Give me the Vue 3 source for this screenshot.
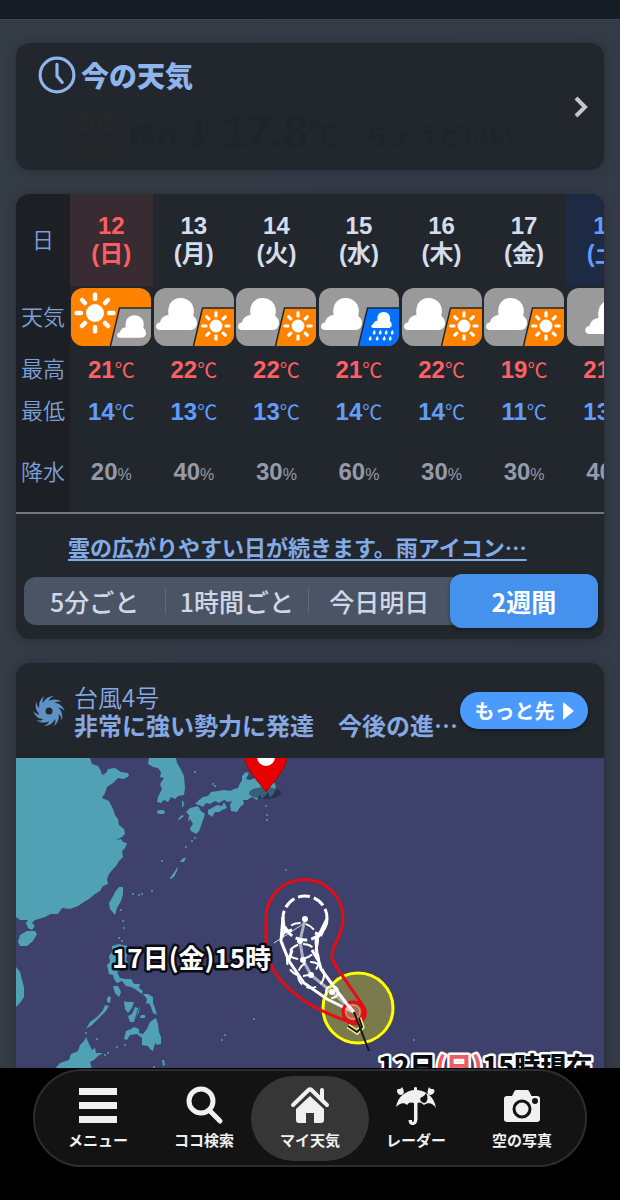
<script setup>
import { ref } from "vue";

const days = [
  { date: "12", week: "日", main: "sun", sub: "cloud", max: 21, min: 14, rain: 20 },
  { date: "13", week: "月", main: "cloud", sub: "sun", max: 22, min: 13, rain: 40 },
  { date: "14", week: "火", main: "cloud", sub: "sun", max: 22, min: 13, rain: 30 },
  { date: "15", week: "水", main: "cloud", sub: "rain", max: 21, min: 14, rain: 60 },
  { date: "16", week: "木", main: "cloud", sub: "sun", max: 22, min: 14, rain: 30 },
  { date: "17", week: "金", main: "cloud", sub: "sun", max: 19, min: 11, rain: 30 },
  { date: "18", week: "土", main: "cloud", sub: "", max: 21, min: 13, rain: 40 },
];

const fills = { sun: "#ff8200", cloud: "#9a9a9a", rain: "#0572ff" };

const rows = [
  { key: "max", label: "最高", unit: "℃" },
  { key: "min", label: "最低", unit: "℃" },
  { key: "rain", label: "降水", unit: "%" },
];

const tabs = ["5分ごと", "1時間ごと", "今日明日", "2週間"];
const activeTab = ref("2週間");

const menu = [
  { id: "menu", label: "メニュー" },
  { id: "search", label: "ココ検索" },
  { id: "home", label: "マイ天気" },
  { id: "radar", label: "レーダー" },
  { id: "photo", label: "空の写真" },
];
const activeMenu = ref("home");

const angles = [0, 45, 90, 135, 180, 225, 270, 315];
const blades = [0, 36, 72, 108, 144, 180, 216, 252, 288, 324];

const drops = [
  [55, 42], [61, 42], [67, 42], [73, 42],
  [51, 48], [58, 48], [65, 48], [71, 48],
];

// forecast positions on the map
const track = [
  { x: 300, y: 941, r: 18 },
  { x: 303, y: 960, r: 16 },
  { x: 311, y: 975, r: 13 },
  { x: 332, y: 992, r: 6 },
];

const islets = [
  [133, 894], [139, 895], [142, 894], [152, 891], [121, 910], [123, 921], [124, 928],
  [119, 938], [122, 941], [162, 861], [171, 878], [186, 847], [192, 841], [195, 838],
  [195, 772], [213, 784], [215, 786], [266, 806], [267, 815], [267, 820], [286, 870],
  [254, 1019], [222, 1040], [225, 1035], [105, 1055], [108, 1053], [117, 1047],
  [125, 1045], [154, 1067], [97, 1039], [414, 1040], [86, 1033], [109, 997],
];
</script>

<template>
  <div class="page">
    <svg class="defs" aria-hidden="true">
      <symbol id="cloud" viewBox="0 0 41 32">
        <path
          d="M4 32C1.500 32 0 30.500 0 28.500C0 26 2 24.500 4 24.500C5 20 8 17.500 12.500 17C11 7 16 0 24.500 0C33 0 38.500 6.500 37.800 14C37.600 16 37 17.500 37.500 18.300C40 20 41 22.500 41 25C41 29 38.500 32 34.500 32Z"
        />
      </symbol>
      <symbol id="sun" viewBox="0 0 42 42">
        <circle cx="21" cy="21" r="9" />
        <rect
          v-for="a in angles"
          :key="a"
          x="18.800"
          y="0.500"
          width="4.400"
          height="8.500"
          rx="1.800"
          :transform="`rotate(${a} 21 21)`"
        />
      </symbol>
    </svg>

    <header class="topbar"></header>

    <main class="main">
      <section class="card now">
        <h2 class="now__title">
          <svg class="now__clock" viewBox="0 0 36 36" aria-hidden="true">
            <circle cx="18" cy="18" r="16" />
            <path d="M18 8v11l5 6" />
          </svg>
          今の天気
        </h2>
        <div class="now__body">
          <svg class="now__icon" viewBox="0 0 40 40" aria-hidden="true">
            <rect width="40" height="40" rx="5" fill="#25272a" />
            <use href="#sun" x="5" y="5" width="30" height="30" fill="#222529" />
          </svg>
          <span>晴れ</span>
          <svg class="now__thermo" viewBox="0 0 18 30" aria-hidden="true">
            <path d="M4 4Q4 1 7 1Q10 1 10 4V18A6 6 0 1 1 4 18ZM12 4H17V6H12ZM12 10H16V12H12Z" />
          </svg>
          <b class="now__temp">17.8<small>℃</small></b>
          <span>ちょうどいい</span>
        </div>
        <a class="now__more" href="#now" aria-label="今の天気">
          <svg viewBox="0 0 14 24" aria-hidden="true"><path d="M2 3l9 9l-9 9" /></svg>
        </a>
      </section>

      <section class="card">
        <div class="scroll">
          <table class="forecast">
            <thead>
              <tr>
                <th class="forecast__label" scope="col">日</th>
                <th
                  v-for="day in days"
                  :key="day.date"
                  scope="col"
                  class="forecast__day"
                  :class="{ sunday: day.week === '日', saturday: day.week === '土' }"
                >
                  {{ day.date }}<br />({{ day.week }})
                </th>
              </tr>
            </thead>
            <tbody>
              <tr class="forecast__icons">
                <th class="forecast__label" scope="row">天気</th>
                <td v-for="day in days" :key="day.date">
                  <svg class="weather" viewBox="0 0 80 58" fill="#fff" aria-hidden="true">
                    <rect width="80" height="58" :fill="fills[day.main]" />
                    <use v-if="day.main === 'sun'" href="#sun" x="3" y="4" width="42" height="42" />
                    <use v-else-if="day.sub" href="#cloud" x="2" y="10" width="41" height="32" />
                    <use v-else href="#cloud" x="16" y="12" width="48" height="34" />
                    <template v-if="day.sub">
                      <path
                        d="M48.500 20H82V60H39Z"
                        :fill="fills[day.sub]"
                        stroke="#22272d"
                        stroke-width="1.500"
                      />
                      <use v-if="day.sub === 'sun'" href="#sun" x="47" y="23" width="30" height="30" />
                      <use v-else-if="day.sub === 'cloud'" href="#cloud" x="46" y="27" width="29" height="23" />
                      <g v-else>
                        <use href="#cloud" x="50" y="24" width="25" height="16" />
                        <path
                          v-for="(p, i) in drops"
                          :key="i"
                          :transform="`translate(${p[0]} ${p[1]})`"
                          d="M.500 0C2 2 2 4.500 0 4.500C-2 4.500-1.500 2 .500 0Z"
                        />
                      </g>
                    </template>
                  </svg>
                </td>
              </tr>
              <tr v-for="row in rows" :key="row.key" :class="row.key">
                <th class="forecast__label" scope="row">{{ row.label }}</th>
                <td v-for="day in days" :key="day.date">
                  <b>{{ day[row.key] }}</b><small>{{ row.unit }}</small>
                </td>
              </tr>
            </tbody>
          </table>
        </div>
        <div class="comment">
          <a href="#comment">雲の広がりやすい日が続きます。雨アイコン…</a>
        </div>
        <div class="tabs">
          <button
            v-for="tab in tabs"
            :key="tab"
            type="button"
            class="tabs__item"
            :class="{ active: tab === activeTab }"
            @click="activeTab = tab"
          >
            {{ tab }}
          </button>
        </div>
      </section>

      <section class="card">
        <div class="typhoon">
          <svg class="typhoon__icon" viewBox="-16 -16 32 32" aria-hidden="true">
            <circle r="6.500" fill="none" stroke="#5f90c6" stroke-width="6" />
            <path
              v-for="a in blades"
              :key="a"
              :transform="`rotate(${a})`"
              d="M-7-5C-6-11-1-15 5-15C1-13-1-11 0-7Z"
              fill="#5f90c6"
            />
          </svg>
          <div class="typhoon__text">
            <p class="typhoon__name">台風4号</p>
            <p class="typhoon__news">非常に強い勢力に発達　今後の進…</p>
          </div>
          <button type="button" class="typhoon__more">
            もっと先
            <svg viewBox="0 0 12 20" aria-hidden="true"><path d="M0 0L12 10L0 20Z" /></svg>
          </button>
        </div>

        <svg class="map" viewBox="16 758 588 372" role="img" aria-label="台風4号の進路">
          <rect x="16" y="758" width="588" height="372" fill="#3e416b" />
          <g fill="#51a1b5">
            <path
              d="M16 758H90L92 764L98 766L101 771L102 775L106 773L108 769L115 768L121 772L128 773L129 776L124 779L118 778L113 783L107 787L105 793L102 798L109 801L113 809L115 815L118 819L119 825L124 829L125 834L122 837L116 840L121 839L123 842L127 843L125 848L122 851L123 857L119 861L116 866L113 869L109 874L107 879L108 884L103 886L100 891L95 894L89 899L84 902L78 906L70 909L62 908L58 914L51 914L45 917L39 919L35 920L32 923L35 926L32 930L28 928L26 923L28 920L20 920L16 917Z"
            />
            <path d="M18 942L20 935L27 931L35 931L37 934L33 941L27 946L20 946Z" />
            <path d="M16 967L20 972L22 980L24 987L24 997L20 1003L16 1007Z" />
            <path d="M123 887L119 887L115 892L112 898L109 903L110 909L115 915L117 908L121 901L123 894Z" />
            <path
              d="M149 758L148 764L153 767L158 768L161 772L160 777L164 778L160 784L162 789L158 797L157 802L161 803L164 800L168 802L171 797L175 799L178 796L184 795L185 788L184 776L180 768L177 763L176 758Z"
            />
            <ellipse cx="161" cy="812" rx="4" ry="2" />
            <path d="M182 800l2 3-1 4h-1zM178 819l4-4 2 1-5 4z" />
            <path
              d="M186 812L190 808L198 806L201 811L205 814L203 820L201 826L199 831L196 834L191 831L190 828L193 824L190 819L188 822L189 815Z"
            />
            <path d="M208 810L212 808L217 805L222 806L224 802L227 808L222 810L219 812L215 812L212 817L208 814Z" />
            <path
              d="M195 804L199 800L203 797L208 796L211 792L218 791L224 790L230 791L234 789L238 788L240 783L242 781L242 776L246 772L249 773L246 779L250 780L257 777L263 777L270 779L275 784L276 789L274 793L271 797L269 796L268 792L265 796L262 799L260 795L257 800L252 797L247 800L243 800L244 804L240 807L237 812L231 811L230 805L232 801L228 802L224 800L219 803L215 801L210 804L206 803L203 807L199 805Z"
            />
            <path d="M186 857L184 862L180 862L182 859zM178 866L175 871L172 875L170 879L174 877L177 871Z" />
            <path
              d="M112 946L119 944L127 946L128 952L126 959L128 963L123 968L117 972L120 978L126 979L131 979L134 984L140 984L139 988L143 991L142 994L135 989L131 987L126 986L122 981L117 983L114 979L113 975L109 974L107 965L110 962L109 956L112 952Z"
            />
            <path d="M113 986L118 986L121 992L119 997L115 993Z" />
            <path d="M143 994L148 994L153 997L153 1003L155 1008L157 1015L153 1013L151 1007L149 1003L146 1004L147 999Z" />
            <path d="M124 1001L127 1002L134 1002L132 1008L128 1013L125 1009Z" />
            <path d="M135 1007L138 1008L136 1015L134 1022L130 1022L128 1016L132 1014Z" />
            <path d="M140 1005L139 1012L136 1018M141 1015L145 1015L145 1018L140 1018Z" />
            <path
              d="M124 1039L126 1031L131 1029L134 1027L139 1029L139 1033L143 1034L147 1029L150 1022L156 1018L158 1024L159 1032L161 1037L161 1044L157 1045L155 1043L153 1051L150 1049L148 1046L142 1045L142 1038L137 1034L130 1035L127 1040Z"
            />
            <path d="M86 1029L90 1022L98 1016L103 1010L105 1005L109 1006L106 1011L100 1017L92 1025Z" />
            <path d="M107 998L111 997L110 1003L107 1002Z" />
            <path
              d="M54 1070L60 1063L69 1060L71 1054L78 1051L80 1045L84 1041L86 1037L90 1046L92 1050L95 1048L96 1053L103 1053L98 1056L94 1060L90 1062L92 1070L90 1130H50Z"
            />
            <path d="M162 1060l2 0 1 5-2 1z" />
            <circle v-for="(p, i) in islets" :key="i" :cx="p[0]" :cy="p[1]" r="1" />
          </g>

          <ellipse cx="265" cy="793" rx="16" ry="6" fill="#17203c" opacity="0.5" />
          <path d="M243 750C245 770 256 778 266 792C276 778 287 770 288 750Z" fill="#e60000" stroke="#a80808" />
          <circle cx="266" cy="757" r="9" fill="#fff" />

          <circle cx="358" cy="1008" r="35" fill="#7a7a4c" stroke="#ff0" stroke-width="3" />
          <path
            d="M266 918A38 38 0 0 1 343 918C343 938 331 945 332 957C333 965 343 975 363 1006A11 11 0 0 1 347 1021C330 1015 315 1008 303 1000C275 980 266 962 266 940Z"
            fill="none"
            stroke="#e60c14"
            stroke-width="3"
          />
          <path d="M305 919L300 941L303 960L311 975L332 992L354 1012" fill="none" stroke="#b0b0c4" stroke-width="3" />
          <path d="M332 992L354 1012L337 989Z" fill="#aaa98e" />
          <path d="M274 943L303 924" stroke="#d8d8e4" />
          <g fill="none" stroke="#fff" stroke-width="3">
            <circle cx="305" cy="918" r="22" stroke-dasharray="12 4" />
            <circle
              v-for="t in track"
              :key="t.y"
              :cx="t.x"
              :cy="t.y"
              :r="t.r"
              stroke-width="2"
              stroke-dasharray="10 5"
            />
            <path d="M283 917L281 941L289 961L304 983L327 999L353 1012L337 991L321 969L317 955L316 941L327 919" />
            <path d="M283 921L285 932L292 930M327 922L321 935L315 933M289 960L292 950M318 960L312 950" />
          </g>
          <circle v-for="t in track" :key="t.x" :cx="t.x" :cy="t.y" r="3" fill="#fff" />
          <circle cx="305" cy="919" r="3" fill="#fff" />
          <circle cx="353" cy="1012" r="10" fill="#f55" fill-opacity="0.4" stroke="#e60c14" stroke-width="3" />
          <circle cx="353" cy="1012" r="7" fill="none" stroke="#f3a590" />
          <path d="M345 1002L354 1012" stroke="#fff" stroke-width="3" />
          <path d="M348 1026L357 1032L362 1027L359 1018" fill="none" stroke="#f3ee84" stroke-width="5" />
          <path
            d="M348 1026L357 1032L362 1027L359 1018M354 1012L369 1051"
            fill="none"
            stroke="#15151c"
            stroke-width="2"
          />

          <text class="map__label" x="112" y="968">17日(金)15時</text>
          <text class="map__label map__label--now" x="378" y="1076">
            12日<tspan class="map__sunday">(日)</tspan>15時現在
          </text>
        </svg>
      </section>
    </main>

    <nav class="nav">
      <div class="nav__pill">
        <button
          v-for="item in menu"
          :key="item.id"
          type="button"
          class="nav__item"
          :class="{ active: item.id === activeMenu }"
          @click="activeMenu = item.id"
        >
          <svg class="nav__icon" viewBox="0 0 40 40" aria-hidden="true">
            <path v-if="item.id === 'menu'" d="M1 3H39V10H1ZM1 17H39V24H1ZM1 31H39V38H1Z" />
            <g v-else-if="item.id === 'search'" fill="none" stroke="#f0f0f0">
              <circle cx="17" cy="16" r="12" stroke-width="5" />
              <path d="M26 26L36 36" stroke-width="5" stroke-linecap="round" />
            </g>
            <g v-else-if="item.id === 'home'">
              <path
                d="M3 20L18.500 5Q20 3.500 21.500 5L37 20M32 14V5"
                fill="none"
                stroke="#f0f0f0"
                stroke-width="4"
                stroke-linecap="round"
              />
              <path d="M20 11L34 24V35Q34 38 31 38H24V28H16V38H9Q6 38 6 35V24Z" />
            </g>
            <g v-else-if="item.id === 'radar'">
              <path
                d="M0 22C2 11 10 6 18 5V3Q18 2 19.500 2Q21 2 21 3V5C30 6 38 11 40 23C37 18 32 17 28 20C25 17 23 17 21.500 18V34C21.500 42 12.500 42 12.500 35H16C16 38 18 38 18 34V18C15 17 13 17 11 20C8 17 4 18 0 22Z"
              />
              <path d="M6 2C9 6 8 10 5 10C1 10 0 5 2 4C4 4 5 4 6 2ZM33 2C31 6 31 10 34 10C38 10 40 5 37 4C35 4 34 4 33 2Z" />
              <path d="M30 8C33 13 31 18 28 18C24 17 23 13 26 12C28 11 29 10 30 8Z" fill="#131313" />
            </g>
            <g v-else>
              <path
                d="M5 11H10L12.500 6Q13 5 14.500 5H25Q26.500 5 27 6L29.500 11H35Q38 11 38 14V34Q38 37 35 37H5Q2 37 2 34V14Q2 11 5 11Z"
              />
              <circle cx="20" cy="24" r="8" fill="#f0f0f0" stroke="#131313" stroke-width="3" />
              <circle cx="33" cy="16" r="3" fill="#131313" />
            </g>
          </svg>
          {{ item.label }}
        </button>
      </div>
    </nav>
  </div>
</template>

<style>
body {
  margin: 0;
  background: #343b47;
}
</style>

<style scoped>
.page {
  min-height: 100vh;
  box-sizing: border-box;
  background: linear-gradient(100deg, #343c46, #343a47);
  color: #d5dcec;
  font-family: "Liberation Sans", "Noto Sans CJK JP", sans-serif;
}

.defs {
  position: absolute;
  width: 0;
  height: 0;
}

button {
  margin: 0;
  padding: 0;
  border: 0;
  background: none;
  color: inherit;
  font-family: "Noto Sans CJK JP", sans-serif;
  cursor: pointer;
}

.topbar {
  height: 19px;
  background: #151c25;
  border-bottom: 1px solid #404650;
}

.main {
  display: flex;
  flex-direction: column;
  gap: 24px;
  padding: 23px 16px 0;
}

.card {
  overflow: hidden;
  border-radius: 14px;
  background: #22272d;
  box-shadow: 0 1px 12px rgba(20, 24, 30, 0.35);
}

.now {
  display: grid;
  grid-template-columns: 1fr auto;
  grid-template-rows: 64px 63px;
  padding: 0 16px 0 22px;
}

.now__title {
  display: flex;
  align-items: center;
  gap: 5px;
  margin: 0;
  color: #8fb4ee;
  font-size: 28px;
  font-weight: 900;
}

.now__clock {
  width: 38px;
  height: 38px;
  fill: none;
  stroke: #8fb4ee;
  stroke-width: 3;
  stroke-linecap: round;
}

.now__body {
  grid-row: 2;
  display: flex;
  align-items: center;
  gap: 12px;
  padding: 0 0 10px 36px;
  color: #1f2429;
  font-size: 25px;
  font-weight: 500;
}

.now__icon {
  width: 44px;
  height: 44px;
}

.now__thermo {
  width: 18px;
  height: 30px;
  fill: #1f2429;
}

.now__temp {
  margin-right: 12px;
  font-size: 44px;
  line-height: 44px;
}

.now__temp small {
  font-size: 32px;
}

.now__more {
  grid-column: 2;
  grid-row: 1 / 3;
  align-self: center;
}

.now__more svg {
  display: block;
  width: 14px;
  height: 24px;
  fill: none;
  stroke: #c6c8cc;
  stroke-width: 4;
}

.scroll {
  overflow-x: auto;
  scrollbar-width: none;
  border-bottom: 2px solid #73777b;
}

.forecast {
  width: 632px;
  table-layout: fixed;
  border-collapse: collapse;
  text-align: center;
  white-space: nowrap;
}

.forecast th,
.forecast td {
  padding: 0;
}

.forecast .forecast__label {
  position: sticky;
  left: 0;
  width: 54px;
  padding-bottom: 4px;
  background: #1c1f23;
  color: #7d9fd8;
  font-size: 22px;
  font-weight: 350;
}

.forecast__day {
  height: 92px;
  font-size: 24px;
  line-height: 28px;
  font-weight: 700;
}

.sunday {
  background: #392b32;
  color: #ff5d61;
}

.saturday {
  background: #1d2a43;
  color: #5f9dfc;
}

.forecast__icons {
  height: 62px;
}

.weather {
  display: block;
  width: 80px;
  height: 58px;
  margin: 0 auto;
  border-radius: 12px;
}

.forecast b {
  font-size: 24px;
}

.forecast small {
  font-size: 20px;
  font-weight: 400;
}

.max,
.min {
  height: 42px;
}

.max td {
  color: #ff6064;
}

.min td {
  color: #629dfb;
}

.rain {
  height: 80px;
}

.rain td {
  color: #949aa8;
}

.forecast .rain small {
  font-size: 16px;
}

.comment {
  padding: 16px 48px 15px 52px;
  font-family: "Noto Sans CJK JP", sans-serif;
  font-size: 22px;
  line-height: 32px;
  font-weight: 700;
  white-space: nowrap;
}

.comment a {
  color: #83abe9;
  text-underline-offset: 3px;
  text-decoration-thickness: 2px;
}

.tabs {
  display: flex;
  align-items: center;
  height: 48px;
  margin: 0 6px 14px 8px;
  border-radius: 12px;
  background: #4a5464;
}

.tabs__item {
  flex: 1;
  height: 26px;
  border-right: 1px solid #606a7b;
  color: #d0d8e8;
  font-size: 25px;
  line-height: 26px;
  font-weight: 500;
  white-space: nowrap;
}

.tabs__item:nth-child(3) {
  border-right: 0;
}

.tabs__item.active {
  flex: 0 0 148px;
  height: 54px;
  border: 0;
  border-radius: 12px;
  background: #4591ee;
  box-shadow: 0 2px 4px rgba(0, 0, 0, 0.3);
  color: #fff;
  font-weight: 700;
}

.typhoon {
  display: flex;
  align-items: center;
  height: 95px;
  padding: 0 16px 0 17px;
}

.typhoon__icon {
  flex: none;
  width: 32px;
  height: 32px;
}

.typhoon__text {
  flex: 1;
  min-width: 0;
  margin-left: 9px;
  color: #86a9e4;
  font-family: "Noto Sans CJK JP", sans-serif;
  font-size: 24px;
  line-height: 28px;
  white-space: nowrap;
}

.typhoon__text p {
  margin: 0;
}

.typhoon__name {
  font-weight: 350;
}

.typhoon__news {
  font-weight: 700;
}

.typhoon__more {
  display: flex;
  flex: none;
  align-items: center;
  justify-content: center;
  gap: 8px;
  width: 128px;
  height: 37px;
  border-radius: 19px;
  background: #4b9bff;
  box-shadow: 0 2px 5px rgba(0, 0, 0, 0.4);
  color: #fff;
  font-size: 20px;
  font-weight: 700;
}

.typhoon__more svg {
  width: 11px;
  height: 18px;
  fill: #fff;
}

.map {
  display: block;
  width: 100%;
  height: auto;
}

.map__label {
  fill: #fff;
  stroke: #0b0c12;
  stroke-width: 5px;
  stroke-linejoin: round;
  paint-order: stroke;
  font-family: "Noto Sans CJK JP", sans-serif;
  font-size: 26px;
  font-weight: 700;
}

.map__label--now {
  fill: #0b0c12;
  stroke: #fff;
  font-weight: 900;
}

.map__sunday {
  fill: #ee5c64;
}

.nav {
  position: fixed;
  right: 0;
  bottom: 0;
  left: 0;
  height: 131px;
  padding: 1px 33px 0;
  background: #000;
}

.nav__pill {
  display: grid;
  grid-template-columns: repeat(5, 1fr);
  align-items: center;
  height: 94px;
  padding: 0 10px;
  border: 2px solid #2b2d30;
  border-radius: 49px;
  background: #131313;
}

.nav__item {
  display: flex;
  flex-direction: column;
  align-items: center;
  justify-content: center;
  gap: 4px;
  height: 85px;
  margin: 0 -6px;
  border-radius: 43px;
  color: #f0f0f0;
  font-size: 15px;
  line-height: 22px;
  font-weight: 700;
}

.nav__item.active {
  background: #363636;
}

.nav__icon {
  width: 40px;
  height: 40px;
  fill: #f0f0f0;
}
</style>
